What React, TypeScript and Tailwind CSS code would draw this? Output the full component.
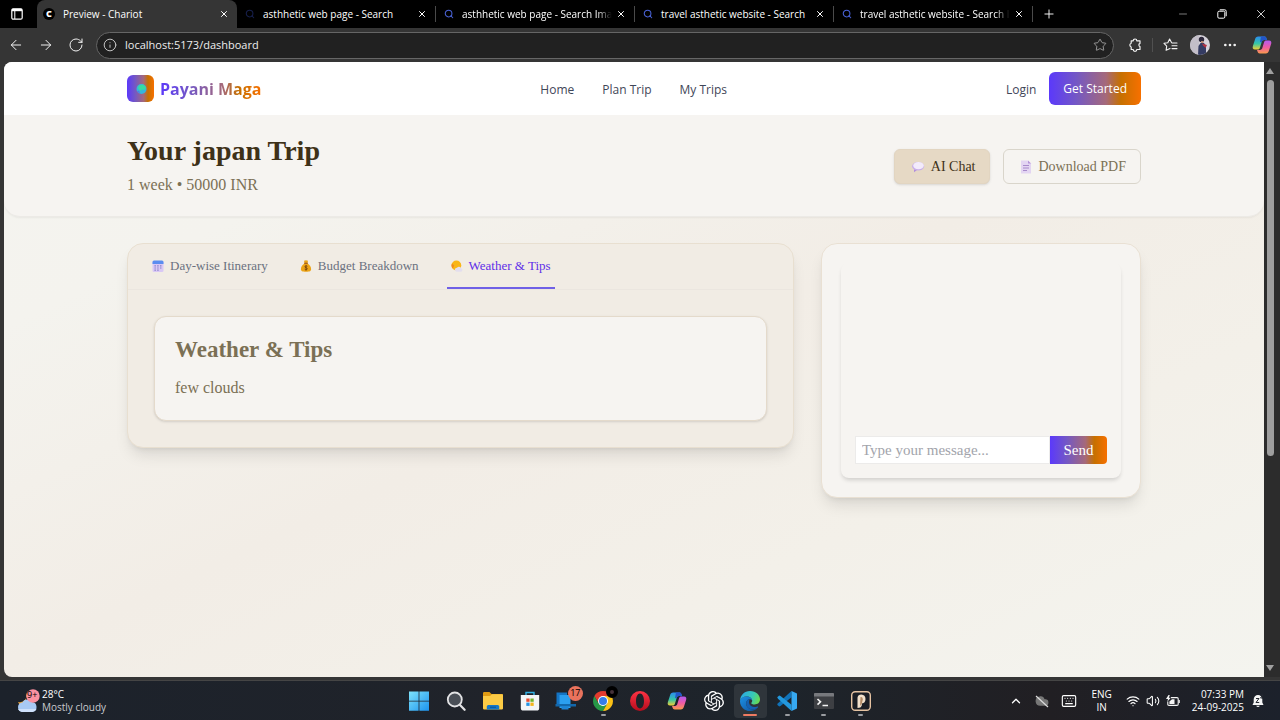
import type { ReactNode } from "react";
import {
  ArrowLeft,
  ArrowRight,
  BatteryCharging,
  ChevronUp,
  Cloud,
  Ellipsis,
  Info,
  Keyboard,
  Minus,
  Plus,
  RotateCw,
  Search,
  Star,
  Volume2,
  Wifi,
  X,
} from "lucide-react";
import { SiOpenai } from "react-icons/si";

const UI = "font-['Open_Sans','Noto_Sans',sans-serif]";
const SERIF = "font-['Liberation_Serif','DejaVu_Serif',serif]";
const ACCENT = "bg-[linear-gradient(90deg,#5b39fb_0%,#7458c4_30%,#a5697a_62%,#c67000_78%,#f77000_100%)]";

/* ---------- page icons ---------- */

function CalendarIcon() {
  return (
    <svg viewBox="0 0 12 12" className="size-3" aria-hidden="true">
      <rect x="0.5" y="1" width="11" height="11" rx="1.5" fill="#d9c8f5" />
      <path d="M0.5 4V2Q0.5 .5 2 .5H10Q11.5 .5 11.5 2V4Z" fill="#5b8df0" />
      <g fill="#7d78c4">
        <path d="M2.5 5.3h1.3v1.2H2.5zM5.3 5.3h1.3v1.2H5.3zM8.1 5.3h1.3v1.2H8.1zM2.5 7.4h1.3v1.2H2.5zM5.3 7.4h1.3v1.2H5.3zM8.1 7.4h1.3v1.2H8.1zM2.5 9.5h1.3v1.2H2.5zM5.3 9.5h1.3v1.2H5.3z" />
      </g>
    </svg>
  );
}

function MoneyBagIcon() {
  return (
    <svg viewBox="0 0 12 12" className="size-3" aria-hidden="true">
      <path d="M4 .8 6 .2 8 .8 7.5 3h-3Z" fill="#e8a51c" />
      <path d="M4.4 3.6C2.2 5 .9 7.2.9 9.3.9 11 2.2 11.8 6 11.8s5.1-.8 5.1-2.5c0-2.1-1.3-4.3-3.5-5.7Z" fill="#eba316" />
      <path d="M4.2 2.7h3.6v1.2H4.2z" fill="#a3560c" />
      <path d="M7.3 6.3C6.8 5.7 4.9 5.7 4.9 6.8s2.4.8 2.4 2-2 1.2-2.6.4M6 5.2v5.2" fill="none" stroke="#6f3d0a" strokeWidth=".9" />
    </svg>
  );
}

function SunCloudIcon() {
  return (
    <svg viewBox="0 0 12 12" className="size-3" aria-hidden="true">
      <circle cx="5.4" cy="5.5" r="4.9" fill="#f9b617" />
      <path d="M2 8.600A4.600 4.600 0 0 1 1 3.400L3.200 5.500Z" fill="#f08b20" />
      <path d="M5.800 11.700a2 2 0 0 1 .2-4 2.400 2.400 0 0 1 4.200.6 1.800 1.800 0 0 1 0 3.400Z" fill="#e3deee" />
    </svg>
  );
}

function ChatBubbleIcon() {
  return (
    <svg viewBox="0 0 13 12" className="h-3 w-3.5" aria-hidden="true">
      <path d="M2.5 8 2.6 11.3 5.5 9Z" fill="#b08ddb" />
      <ellipse cx="6.6" cy="5.2" rx="6" ry="4.3" fill="#c9aee9" />
      <ellipse cx="7" cy="4.6" rx="5.3" ry="3.6" fill="#f3ebfb" />
    </svg>
  );
}

function DocumentIcon() {
  return (
    <svg viewBox="0 0 12 14" className="h-3.5 w-3" aria-hidden="true">
      <path d="M1 .5h7L11 3.5v10H1Z" fill="#e3d5f2" />
      <path d="M8 .5 11 3.5H8Z" fill="#b493d8" />
      <path d="M3 5.5h6M3 8h6M3 10.5h4" stroke="#a88acb" strokeWidth="1" />
    </svg>
  );
}

/* ---------- browser icons ---------- */

function CopilotIcon({ className }: { className: string }) {
  return (
    <svg viewBox="0 0 20 20" className={className} aria-hidden="true">
      <defs>
        <linearGradient id="copilotCool" x1="0" y1="0" x2="0" y2="1">
          <stop offset="0" stopColor="#2b8cf0" />
          <stop offset=".55" stopColor="#35c6a5" />
          <stop offset="1" stopColor="#f2cf35" />
        </linearGradient>
        <linearGradient id="copilotWarm" x1="0" y1="0" x2="0" y2="1">
          <stop offset="0" stopColor="#b15cf0" />
          <stop offset=".5" stopColor="#ef5aa5" />
          <stop offset="1" stopColor="#fa9a4c" />
        </linearGradient>
      </defs>
      <path d="M9 1.5h3.2c1.3 0 1.9.6 2.3 1.9L15 5h-3c-1.4 0-2 .9-2.4 2.2L8 12.5c-.5 1.4-1 2-2.4 2H3C.9 14.500 .3 13 .9 11L3 4.400C3.600 2.400 4.500 1.500 6.200 1.500Z" fill="url(#copilotCool)" />
      <path d="M9 1.500h3.200c1.300 0 1.900.6 2.300 1.900L15 5h-3c-1.400 0-2 .9-2.400 2.200L8 7Z" fill="#2356c9" />
      <path d="M11 18.500H7.800c-1.300 0-1.900-.6-2.300-1.900L5 15h3c1.400 0 2-.9 2.400-2.200L12 7.500c.5-1.400 1-2 2.400-2H17c2.100 0 2.700 1.500 2.100 3.500L17 15.600c-.6 2-1.500 2.900-3.200 2.900Z" fill="url(#copilotWarm)" />
    </svg>
  );
}

function TabActionsIcon() {
  return (
    <svg viewBox="0 0 12 12" className="size-3" fill="none" stroke="#fff" aria-hidden="true">
      <rect x=".8" y=".8" width="10.400" height="10.400" rx="1.500" strokeWidth="1.200" />
      <path d="M1 2h10" strokeWidth="2.400" />
      <path d="M3.800 3v8" strokeWidth="1" />
    </svg>
  );
}

function PuzzleIcon() {
  return (
    <svg viewBox="0 0 14 14" className="size-3.5" fill="none" stroke="#f2f2f2" strokeWidth="1.200" strokeLinejoin="round" aria-hidden="true">
      <path d="M5.200 2.800a1.800 1.800 0 0 1 3.600 0H12V5.400a1.700 1.700 0 0 0 0 3.200V11.500H8.800a1.800 1.800 0 0 1-3.600 0H3.200V9a2 2 0 0 1 0-3.800V2.800Z" />
    </svg>
  );
}

function FavoritesIcon() {
  return (
    <svg viewBox="0 0 15 14" className="h-3.5 w-[15px]" fill="none" stroke="#f2f2f2" strokeWidth="1.100" strokeLinejoin="round" strokeLinecap="round" aria-hidden="true">
      <path d="M8.500 4.500 6.600 1 4.800 4.700 1 5.300 3.700 8.100 3.100 12.300 7 10.400M9 5h5M9 7.800h5M9 10.600h5" />
    </svg>
  );
}

function Avatar() {
  return (
    <svg viewBox="0 0 20 20" className="size-5 rounded-full" aria-hidden="true">
      <rect width="20" height="20" fill="#d6d2da" />
      <path d="M0 0H9V20H0Z" fill="#c3bec8" />
      <circle cx="11.500" cy="4.500" r="2.700" fill="#2f2a3e" />
      <path d="M11 6h2.500v3H11Z" fill="#b78974" />
      <path d="M8 20 8.500 11 10.500 8H14L16 11V20Z" fill="#343b62" />
      <path d="M12 8.500 17 10 15.500 13 13 10.500Z" fill="#b13242" />
    </svg>
  );
}

function RestoreIcon() {
  return (
    <svg viewBox="0 0 10 10" className="size-2.5" fill="none" stroke="#fff" strokeWidth="1" aria-hidden="true">
      <rect x=".8" y="2.200" width="7" height="7" rx="1.300" />
      <path d="M2.800.8H7.700Q9.200.8 9.200 2.300V7.200" />
    </svg>
  );
}

/* ---------- taskbar icons ---------- */

function WindowsIcon() {
  return (
    <svg viewBox="0 0 20 20" className="size-5" aria-hidden="true">
      <linearGradient id="win" x1="0" y1="0" x2="1" y2="1">
        <stop offset="0" stopColor="#7fe3fb" />
        <stop offset="1" stopColor="#1b93ef" />
      </linearGradient>
      <path d="M0 .5h9.600V9.700H0ZM10.400.5H20V9.700H10.400ZM0 10.500h9.600V19.700H0ZM10.400 10.500H20V19.700H10.400Z" fill="url(#win)" />
    </svg>
  );
}

function TaskSearchIcon() {
  return (
    <svg viewBox="0 0 20 20" className="size-5" fill="none" aria-hidden="true">
      <circle cx="8.800" cy="8.500" r="7" fill="#4a4f57" stroke="#e2e2e4" strokeWidth="1.800" />
      <path d="m14 14 4.600 4.800" stroke="#e2e2e4" strokeWidth="2.200" strokeLinecap="round" />
    </svg>
  );
}

function FolderIcon() {
  return (
    <svg viewBox="0 0 20 20" className="size-5" aria-hidden="true">
      <path d="M0 2.200Q0 1 1.200 1H6.500L8.500 3H19Q20 3 20 4V8H0Z" fill="#e09b13" />
      <path d="M0 5H7L9 3.200H19Q20 3.200 20 4.500V17.500Q20 18.600 18.800 18.600H1.200Q0 18.600 0 17.500Z" fill="#fccb45" />
      <path d="M3.800 18.600V15.500Q3.800 14 5.300 14H14.700Q16.200 14 16.200 15.500V18.600Z" fill="#1577c7" />
      <path d="M7 16.200h6" stroke="#0b4f91" strokeWidth="1" />
    </svg>
  );
}

function StoreIcon() {
  return (
    <svg viewBox="0 0 20 20" className="size-5" aria-hidden="true">
      <path d="M6 4.500V1.500H14V4.500" fill="none" stroke="#32b2e6" strokeWidth="1.400" />
      <path d="M.8 4H19.200V17Q19.200 19.600 16.600 19.600H3.400Q.8 19.600.8 17Z" fill="#f4f5f7" />
      <path d="M6.300 7.500h3.300v3.300H6.300Z" fill="#e84b30" />
      <path d="M10.400 7.500h3.300v3.300h-3.300Z" fill="#72b52c" />
      <path d="M6.300 11.600h3.300v3.300H6.300Z" fill="#2494e4" />
      <path d="M10.400 11.600h3.300v3.300h-3.300Z" fill="#f5b51c" />
    </svg>
  );
}

function PhoneLinkIcon() {
  return (
    <svg viewBox="0 0 24 20" className="h-5 w-6" aria-hidden="true">
      <path d="M2.500 1.500H13V13H2.500Z" fill="#1474c4" />
      <path d="M5.500 4h11v13h-11Z" fill="#2b9ff0" />
      <path d="M1.500 13H22v2.500H1.500Z" fill="#1268ad" />
      <path d="M7.500 15.500h7V18.500h-7Z" fill="#1d84d6" />
    </svg>
  );
}

function ChromeIcon() {
  return (
    <svg viewBox="0 0 20 20" className="size-5" aria-hidden="true">
      <path d="M1.340 5 5.670 12.500 10 10 10 5 18.660 5A10 10 0 0 0 1.340 5Z" fill="#e33b2e" />
      <path d="M1.340 5A10 10 0 0 0 10 20L14.330 12.500 10 10 5.670 12.500Z" fill="#279847" />
      <path d="M18.660 5H10V10L14.330 12.500 10 20A10 10 0 0 0 18.660 5Z" fill="#fbc116" />
      <circle cx="10" cy="10" r="5" fill="#fff" />
      <circle cx="10" cy="10" r="4" fill="#357de8" />
    </svg>
  );
}

function OperaIcon() {
  return (
    <svg viewBox="0 0 20 20" className="size-5" aria-hidden="true">
      <linearGradient id="opera" x1="0" y1="0" x2="0" y2="1">
        <stop offset="0" stopColor="#ff3344" />
        <stop offset="1" stopColor="#b60d1d" />
      </linearGradient>
      <path fillRule="evenodd" d="M10 0a10 10 0 1 0 0 20 10 10 0 0 0 0-20Zm0 2.600c2.500 0 4 3.200 4 7.400s-1.500 7.400-4 7.400S6 14.200 6 10s1.500-7.400 4-7.400Z" fill="url(#opera)" />
    </svg>
  );
}

function EdgeIcon() {
  return (
    <svg viewBox="0 0 20 20" className="size-5" aria-hidden="true">
      <defs>
        <linearGradient id="edgeTop" x1="0" y1=".3" x2="1" y2=".6">
          <stop offset="0" stopColor="#2aa9e8" />
          <stop offset=".6" stopColor="#38c9b4" />
          <stop offset="1" stopColor="#69dc50" />
        </linearGradient>
        <linearGradient id="edgeLow" x1="0" y1="0" x2="1" y2="1">
          <stop offset="0" stopColor="#1e92e4" />
          <stop offset="1" stopColor="#0d4f9e" />
        </linearGradient>
      </defs>
      <path d="M0 9.700C.3 4 4.500 0 10 0c6 0 10 4 10 8.300 0 3.400-2.600 5.200-5.400 5.200-2.100 0-3.300-.7-3.300-1.300 0-.5.900-.9.900-2.400C12.200 7.500 10 5.400 6.600 5.400 3.500 5.400 1 7 0 9.700Z" fill="url(#edgeTop)" />
      <path d="M0 9.700C.5 7 3 5.400 6.600 5.400c3.400 0 5.600 2.100 5.600 4.400-.5-1-1.400-1.500-2.600-1.500-2 0-3.400 1.700-3.400 4.200 0 3.500 3 5.900 6.500 5.900 2.300 0 4-.9 5.200-1.900C16.300 18.500 13.600 20 10 20 4.200 20-.2 15.300 0 9.700Z" fill="url(#edgeLow)" />
      <path d="M6.200 12.500c0 3.500 3 5.900 6.500 5.900 2.300 0 4-.9 5.200-1.900.4-.6.200-1.200-.6-.9-3.900 1.400-7.300-.3-8.100-3-.5-1.700 0-3.300.4-4.300-2 0-3.400 1.700-3.400 4.200Z" fill="#1561b2" />
    </svg>
  );
}

function VsCodeIcon() {
  return (
    <svg viewBox="0 0 20 20" className="size-5" aria-hidden="true">
      <path d="M14.500 0 1 12.300.2 13.800 2.200 15.400 3.500 15 14.500 6.200Z" fill="#1073ba" />
      <path d="M14.500 20 1 7.700.2 6.200 2.200 4.600 3.500 5 14.500 13.800Z" fill="#2398dd" />
      <path d="M14.500 0 19.500 2.200Q20 2.500 20 3V17Q20 17.500 19.500 17.800L14.500 20Z" fill="#36a9f2" />
    </svg>
  );
}

function TerminalIcon() {
  return (
    <svg viewBox="0 0 20 20" className="size-5" aria-hidden="true">
      <rect y="2" width="20" height="16" rx="1" fill="#3d3f43" />
      <path d="M0 3Q0 2 1 2H19Q20 2 20 3V5.500H0Z" fill="#77797d" />
      <path d="m3.500 8 3 2.800-3 2.900M8.500 14.500h5.500" fill="none" stroke="#f2f2f2" strokeWidth="1.600" />
    </svg>
  );
}

function PieceIcon() {
  return (
    <svg viewBox="0 0 20 20" className="size-5" aria-hidden="true">
      <rect x=".7" y=".7" width="18.600" height="18.600" rx="3.500" fill="#1b1e25" stroke="#e6c3a2" strokeWidth="1.400" />
      <path d="M6.500 6.500Q7 3.500 10.300 3.500 14.500 3.800 14.500 8T10.800 12.500V14.500Q10 17 6.500 17Z" fill="#f2e0cb" />
      <path d="M9.500 6Q12 5.500 11.800 8.500L10.800 12.500 9 15Z" fill="#b18863" />
    </svg>
  );
}

function WeatherIcon() {
  return (
    <svg viewBox="0 0 24 24" className="size-6" aria-hidden="true">
      <path d="M10 3.500a6.800 6.800 0 0 1-8 9.500 7 7 0 0 0 8 4.500Z" fill="#f3a83b" />
      <path d="M6 23a4.800 4.800 0 0 1 .3-9.500 5.400 5.400 0 0 1 9.500-.4 5 5 0 0 1 .7 9.900Z" fill="#a8c9f4" />
      <path d="M6 23a4.800 4.800 0 0 1-4-3h18.500a5 5 0 0 1-4 3Z" fill="#cfe1fb" />
      <circle cx="17" cy="7" r="6.700" fill="#fb91a0" />
    </svg>
  );
}

function TrayBatteryIcon() {
  return (
    <svg viewBox="0 0 14 12" className="h-3 w-3.5" aria-hidden="true">
      <path d="M5 2.600H11Q12.200 2.600 12.200 3.800V9.200Q12.200 10.400 11 10.400H3Q1.800 10.400 1.800 9.200V6.500" fill="none" stroke="#f5f5f5" strokeWidth="1.100" />
      <path d="M3.400 6.500 6 4.200H8.500V8.900H3.400ZM12.600 5h1.200v3h-1.200Z" fill="#f5f5f5" />
      <path d="M2.500 0 0 4H2L1.300 6.800 4.800 2.800H2.800L3.800 0Z" fill="#f5f5f5" />
    </svg>
  );
}

function BellIcon() {
  return (
    <svg viewBox="0 0 12 14" className="h-3.5 w-3" aria-hidden="true">
      <path d="M6 1a4.300 4.300 0 0 0-4.300 4.300V8.500L.5 11h11l-1.200-2.500V5.300A4.300 4.300 0 0 0 6 1ZM4.200 11.700a1.900 1.900 0 0 0 3.600 0Z" fill="#f5f5f5" />
      <path d="M4 4.500h3L4 8.500h3.200M8.500 1h2.500L8.500 4H11" fill="none" stroke="#252931" strokeWidth="1" />
    </svg>
  );
}

/* ---------- browser chrome ---------- */

const tabs = [
  { title: "Preview - Chariot", active: true },
  { title: "asthhetic web page - Search" },
  { title: "asthhetic web page - Search Imag", fade: true },
  { title: "travel asthetic website - Search" },
  { title: "travel asthetic website - Search In", fade: true },
];

function TabStrip() {
  return (
    <div className="flex h-7 shrink-0 items-stretch bg-black text-white">
      <button aria-label="Tab actions" className="flex w-[37px] shrink-0 items-center justify-center pr-1">
        <TabActionsIcon />
      </button>
      {tabs.map((tab, i) => (
        <div
          key={i}
          className={
            tab.active
              ? "flex w-[200px] min-w-0 items-center rounded-t-lg bg-[#353535] pr-2 pl-1.5"
              : "flex w-[199px] min-w-0 items-center pr-2 pl-2"
          }
        >
          {tab.active ? (
            <span className="flex size-3 shrink-0 items-center justify-center rounded-full bg-black text-[9px] leading-3 font-extrabold">C</span>
          ) : (
            <Search className={i === 1 ? "size-2.5 shrink-0 text-[#17204d]" : "size-2.5 shrink-0 text-[#4a63d8]"} strokeWidth={2.5} />
          )}
          <button
            className={
              tab.fade
                ? "ml-2 min-w-0 flex-1 mask-r-from-90% text-left text-[10px] leading-4 whitespace-nowrap"
                : "ml-2 min-w-0 flex-1 text-left text-[10px] leading-4 whitespace-nowrap"
            }
          >
            {tab.title}
          </button>
          <button aria-label="Close tab" className="ml-1 shrink-0">
            <X className="size-2.5" strokeWidth={2.4} />
          </button>
          {i > 0 && <span className="-mr-2 ml-2 h-4 w-px shrink-0 bg-[#4a4a4a]" />}
        </div>
      ))}
      <button aria-label="New tab" className="flex w-8 shrink-0 items-center justify-center">
        <Plus className="size-3.5" strokeWidth={1.6} />
      </button>
      <div className="ml-auto flex shrink-0 items-center">
        <button aria-label="Minimize" className="flex w-[39px] justify-center">
          <Minus className="size-3 text-[#a3a3a3]" strokeWidth={1.5} />
        </button>
        <button aria-label="Restore" className="flex w-[39px] justify-center">
          <RestoreIcon />
        </button>
        <button aria-label="Close window" className="flex w-[39px] justify-center">
          <X className="size-3.5" strokeWidth={1.4} />
        </button>
      </div>
    </div>
  );
}

function Toolbar() {
  return (
    <div className="flex h-[34px] shrink-0 items-center bg-[#353535] px-2 text-[#f2f2f2]">
      <div className="flex items-center gap-3.5">
        <button aria-label="Back"><ArrowLeft className="size-4" strokeWidth={1.5} /></button>
        <button aria-label="Forward"><ArrowRight className="size-4" strokeWidth={1.5} /></button>
        <button aria-label="Reload"><RotateCw className="size-4" strokeWidth={1.5} /></button>
      </div>
      <div className="ml-3 flex h-[27px] min-w-0 flex-1 items-center rounded-full border border-[#666] bg-[#212121] px-1.5">
        <Info className="size-3.5 shrink-0 text-[#c4c4c4]" strokeWidth={1.7} />
        <input
          aria-label="Address"
          defaultValue="localhost:5173/dashboard"
          className="ml-2 min-w-0 flex-1 bg-transparent text-[11px] leading-4 text-[#ededed] outline-none"
        />
        <button aria-label="Add to favorites"><Star className="size-3.5 text-[#b0b0b0]" strokeWidth={1.4} /></button>
      </div>
      <div className="ml-3.5 flex shrink-0 items-center">
        <button aria-label="Extensions"><PuzzleIcon /></button>
        <span className="mx-2.5 h-3.5 w-px bg-[#505050]" />
        <button aria-label="Favorites"><FavoritesIcon /></button>
        <button aria-label="Profile" className="ml-3"><Avatar /></button>
        <button aria-label="Settings" className="ml-3"><Ellipsis className="size-4" strokeWidth={2} /></button>
        <button aria-label="Copilot" className="ml-3.5"><CopilotIcon className="size-5" /></button>
      </div>
    </div>
  );
}

/* ---------- dashboard ---------- */

function SiteHeader() {
  return (
    <header className="bg-white">
      <div className="mx-auto flex h-[53px] w-full max-w-[1014px] items-center justify-between text-[#3f4658]">
        <a href="#home" className="flex items-center gap-1.5">
          <span className={`flex size-[27px] items-center justify-center rounded-md ${ACCENT}`}>
            <svg viewBox="0 0 12 12" className="size-3" aria-hidden="true">
              <circle cx="6.500" cy="6" r="5" fill="#35b6dd" />
              <path d="M4 2.500 8 1.500 11 4 10 7 7 6.500 5 8 3 5Z" fill="#38dca0" />
              <path d="M2 8.500 5 10.600 4 7.500Z" fill="#5177e8" />
            </svg>
          </span>
          <span className={`bg-clip-text text-[16px] leading-6 font-bold text-transparent ${ACCENT}`}>Payani Maga</span>
        </a>
        <nav className="flex gap-7 pt-0.5 text-xs leading-5">
          <a href="#home">Home</a>
          <a href="#plan">Plan Trip</a>
          <a href="#trips">My Trips</a>
        </nav>
        <div className="flex items-center gap-[13px] text-xs leading-5">
          <a href="#login" className="pt-0.5">Login</a>
          <button className={`h-[33px] rounded-md px-3.5 font-medium text-white ${ACCENT}`}>Get Started</button>
        </div>
      </div>
    </header>
  );
}

function TripHero() {
  return (
    <section className={`rounded-b-2xl border-b border-[#eceae6] bg-[#f6f4f1] shadow-xs ${SERIF}`}>
      <div className="mx-auto flex h-[101px] w-full max-w-[1014px] items-center justify-between">
        <div className="pb-0.5">
          <h1 className="text-[28px] leading-9 font-bold text-[#3e3118]">Your japan Trip</h1>
          <p className="mt-1 text-base leading-6 text-[#7b7055]">1 week • 50000 INR</p>
        </div>
        <div className="flex gap-[13px] pt-0.5 text-sm leading-5">
          <button className="flex h-[35px] items-center gap-1.5 rounded-md border border-[#e2d5c1] bg-[#e6d9c5] pr-3.5 pl-4 text-[#3e3118] shadow-sm">
            <ChatBubbleIcon />
            AI Chat
          </button>
          <button className="flex h-[35px] items-center gap-1.5 rounded-md border border-[#d9d5cb] pr-3.5 pl-4 text-[#7b7055]">
            <DocumentIcon />
            Download PDF
          </button>
        </div>
      </div>
    </section>
  );
}

function PlanTab({ icon, label, active }: { icon: ReactNode; label: string; active?: boolean }) {
  return (
    <button
      role="tab"
      aria-selected={active ? true : false}
      className={
        active
          ? "flex items-center gap-1.5 border-b-2 border-[#6f60e6] px-1 text-[#5f2fe8]"
          : "flex items-center gap-1.5 border-b-2 border-transparent px-1 text-[#6b7180]"
      }
    >
      {icon}
      {label}
    </button>
  );
}

function PlanPanel() {
  return (
    <section className="min-w-0 flex-1 rounded-2xl border border-[#e8dfd0] bg-[#f1ece4] shadow-lg">
      <div role="tablist" className="flex h-[46px] gap-6 border-b border-[#ebe6df] px-5 text-[13px] leading-4">
        <PlanTab icon={<CalendarIcon />} label="Day-wise Itinerary" />
        <PlanTab icon={<MoneyBagIcon />} label="Budget Breakdown" />
        <PlanTab icon={<SunCloudIcon />} label="Weather & Tips" active />
      </div>
      <div className="p-[26px]">
        <div className="rounded-xl border border-[#e4dacb] bg-[#f6f4f1] px-5 pt-[17px] pb-5 text-[#7b7055] shadow-sm">
          <h2 className="text-[23px] leading-8 font-bold">Weather &amp; Tips</h2>
          <p className="mt-2.5 text-base leading-6">few clouds</p>
        </div>
      </div>
    </section>
  );
}

function ChatPanel() {
  return (
    <aside className="w-80 shrink-0 rounded-2xl border border-[#e9e0d3] bg-[#f6f4f1] p-[19px] shadow-lg">
      <div className="flex h-[215px] flex-col rounded-lg p-3.5 shadow-[0_3px_4px_-1px_rgba(0,0,0,0.16)]">
        <div className="flex-1" />
        <form className="flex h-7 text-[15px] leading-5" onSubmit={(e) => e.preventDefault()}>
          <input
            aria-label="Message"
            placeholder="Type your message..."
            className="min-w-0 flex-1 border border-[#ecebea] bg-white px-1.5 placeholder:text-[#a2a4ab]"
          />
          <button className={`w-[57px] rounded-r font-medium text-white ${ACCENT}`}>Send</button>
        </form>
      </div>
    </aside>
  );
}

function ScrollBar() {
  return (
    <div className="flex w-4 shrink-0 flex-col items-center bg-[#2c2c2c] py-1.5 pr-1" aria-hidden="true">
      <svg viewBox="0 0 8 6" className="h-1.5 w-2"><path d="M4 0 8 6H0Z" fill="#a0a0a0" /></svg>
      <div className="my-1.5 flex w-[7px] flex-1 flex-col">
        <div className="h-[65%] rounded-full bg-[#9e9e9e]" />
      </div>
      <svg viewBox="0 0 8 6" className="h-1.5 w-2"><path d="M4 6 8 0H0Z" fill="#a0a0a0" /></svg>
    </div>
  );
}

/* ---------- taskbar ---------- */

const apps: { name: string; icon: ReactNode; running?: boolean; current?: boolean; badge?: ReactNode }[] = [
  { name: "Start", icon: <WindowsIcon /> },
  { name: "Search", icon: <TaskSearchIcon /> },
  { name: "File Explorer", icon: <FolderIcon /> },
  { name: "Store", icon: <StoreIcon /> },
  {
    name: "Phone Link",
    icon: <PhoneLinkIcon />,
    badge: <span className="absolute top-0.5 right-0 flex size-[15px] items-center justify-center rounded-full bg-[#e9735d] text-[9px] leading-3 text-black">17</span>,
  },
  {
    name: "Chrome",
    icon: <ChromeIcon />,
    running: true,
    badge: <span className="absolute top-0.5 right-0.5 size-3 rounded-full border-4 border-black bg-[#46323a]" />,
  },
  { name: "Opera", icon: <OperaIcon /> },
  { name: "Copilot", icon: <CopilotIcon className="size-5" /> },
  { name: "ChatGPT", icon: <SiOpenai className="size-5 text-white" /> },
  { name: "Edge", icon: <EdgeIcon />, current: true },
  { name: "Visual Studio Code", icon: <VsCodeIcon />, running: true },
  { name: "Terminal", icon: <TerminalIcon />, running: true },
  { name: "Pieces", icon: <PieceIcon />, running: true },
];

function Taskbar() {
  return (
    <footer className="grid h-10 shrink-0 grid-cols-[1fr_auto_1fr] items-center border-t border-[#454545] bg-[linear-gradient(90deg,#1c222b,#20232a_40%,#1d242b_60%,#211f23_82%,#1c212b)] text-[10px] leading-[13px] text-white">
      <button className="relative flex items-center gap-0.5 pl-4 text-left">
        <WeatherIcon />
        <span className="absolute top-0 left-[27px] text-[9px] leading-[14px] text-black">9+</span>
        <span>
          28°C
          <br />
          <span className="text-[#c9cbcf]">Mostly cloudy</span>
        </span>
      </button>
      <div className="grid w-[478px] grid-cols-13">
        {apps.map((app) => (
          <button
            key={app.name}
            aria-label={app.name}
            className={
              app.current
                ? "relative mx-0.5 flex h-[34px] items-center justify-center rounded bg-[#2f353b]"
                : "relative mx-0.5 flex h-[34px] items-center justify-center"
            }
          >
            {app.icon}
            {app.badge}
            {app.running && <span className="absolute bottom-0.5 h-0.5 w-[5px] rounded-full bg-[#9a9da1]" />}
            {app.current && <span className="absolute bottom-0.5 h-0.5 w-3.5 rounded-full bg-[#ef7b62]" />}
          </button>
        ))}
      </div>
      <div className="flex items-center justify-end pr-4">
        <button aria-label="Hidden icons"><ChevronUp className="size-3.5" strokeWidth={2.2} /></button>
        <button aria-label="OneDrive" className="relative ml-3">
          <Cloud className="size-3.5 fill-[#777] text-[#777]" />
          <svg viewBox="0 0 14 14" className="absolute inset-0 size-3.5"><path d="m1 2 12 11" stroke="#ddd" strokeWidth="1.200" /></svg>
        </button>
        <button aria-label="Keyboard" className="ml-3"><Keyboard className="size-4" strokeWidth={1.7} /></button>
        <button className="mx-3.5 text-center">
          ENG
          <br />
          IN
        </button>
        <button className="flex items-center gap-1.5" aria-label="Quick settings">
          <Wifi className="size-3.5" strokeWidth={2} />
          <Volume2 className="size-3.5" strokeWidth={1.8} />
          <TrayBatteryIcon />
        </button>
        <button className="mr-2 ml-3 text-right">
          07:33 PM
          <br />
          24-09-2025
        </button>
        <button aria-label="Notifications"><BellIcon /></button>
      </div>
    </footer>
  );
}

export default function App() {
  return (
    <div className={`flex h-screen flex-col overflow-hidden bg-[#353535] ${UI}`}>
      <TabStrip />
      <Toolbar />
      <div className="flex min-h-0 flex-1 pb-[3px] pl-1">
        <div className="min-w-0 flex-1 overflow-hidden rounded-l-lg bg-[linear-gradient(155deg,#f4f4f0_0%,#f4f3ee_22%,#f2ede6_50%,#f3f0e9_72%,#f4f4ef_100%)]">
          <SiteHeader />
          <TripHero />
          <main className={`mx-auto flex w-full max-w-[1014px] items-start gap-[27px] pt-[26px] ${SERIF}`}>
            <PlanPanel />
            <ChatPanel />
          </main>
        </div>
        <ScrollBar />
      </div>
      <Taskbar />
    </div>
  );
}
